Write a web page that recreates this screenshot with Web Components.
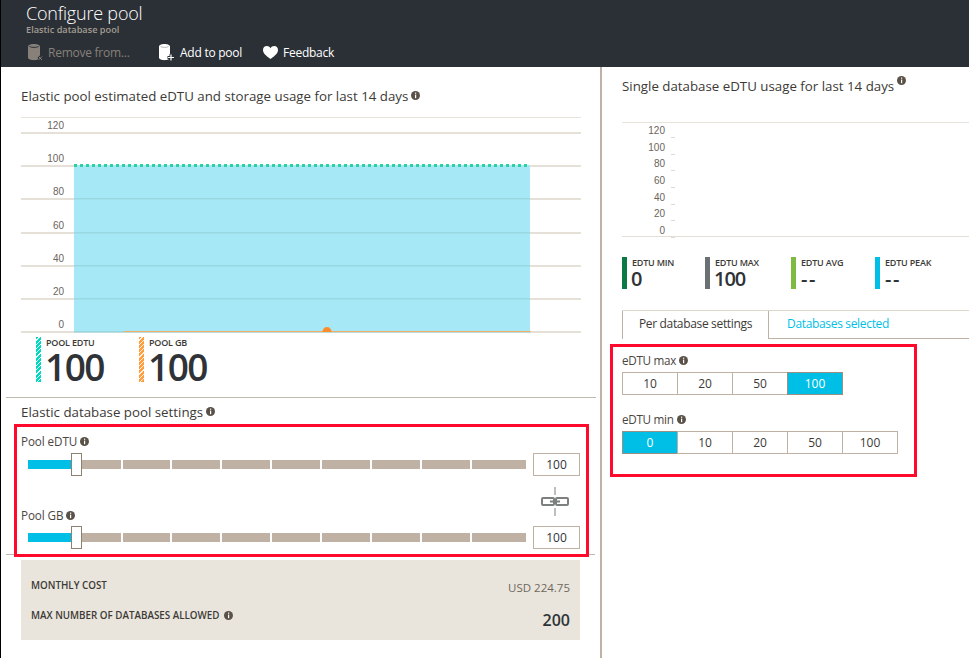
<!DOCTYPE html>
<html>
<head>
<meta charset="utf-8">
<title>Configure pool</title>
<style>
  html, body { margin: 0; padding: 0; background: #fff; }
  body { font-family: "Open Sans", "Liberation Sans", sans-serif; color: #3c3a36; }
</style>
</head>
<body>
<m-root></m-root>
<script>
class BaseElement extends HTMLElement {
  render(htmlstring) {
    if (!this.shadowRoot) this.attachShadow({mode: 'open'});
    let tpl = document.createElement('template');
    tpl.innerHTML = htmlstring;
    this.shadowRoot.appendChild(tpl.content.cloneNode(true));
    return this;
  }
  attr(name, dflt) {
    return this.hasAttribute(name) ? this.getAttribute(name) : dflt;
  }
}

customElements.define('m-info', class extends BaseElement {
  connectedCallback() {
    this.render(`<style>
      :host { display: inline-block; width: 9px; height: 9px; line-height: 0; }
      svg { display: block; }
      </style>
      <svg width="9" height="9" viewBox="0 0 9 9">
        <circle cx="4.5" cy="4.5" r="4.5" fill="#5a5248"/>
        <rect x="4" y="1.6" width="1.2" height="1.2" fill="#fff"/>
        <rect x="4" y="3.6" width="1.2" height="3.6" fill="#fff"/>
      </svg>`);
  }
});

customElements.define('m-command', class extends BaseElement {
  connectedCallback() {
    const icons = {
      remove: `<svg width="17" height="18" viewBox="0 0 17 18">
        <path d="M2 3.500c0-3.500 12-3.500 12 0v11c0 3.500-12 3.500-12 0z" fill="#87817a"/>
        <path d="M3.500 3.500c1.500 1.200 7.500 1.200 9 0" stroke="#2b3036" fill="none"/>
        <path d="M12.500 13.500l3.500 3.500M16 13.500l-3.500 3.500" stroke="#2b3036" stroke-width="2.500"/>
        <path d="M12.500 13.500l3.500 3.500M16 13.500l-3.500 3.500" stroke="#87817a" stroke-width="1"/></svg>`,
      add: `<svg width="17" height="18" viewBox="0 0 17 18">
        <path d="M1 3.500c0-3.500 11-3.500 11 0v11c0 3.500-11 3.500-11 0z" fill="#fff"/>
        <path d="M2.500 3.500c1.500 1.200 6.500 1.200 8 0" stroke="#b9b9b9" fill="none"/>
        <path d="M13 11v6.500M9.500 14.500h6.500" stroke="#2b3036" stroke-width="3"/>
        <path d="M13 11.500v6M10 14.500h6" stroke="#fff" stroke-width="1.200"/></svg>`,
      heart: `<svg width="15" height="13" viewBox="0 0 15 13">
        <path d="M7.500 13C3 9.500 0 7.200 0 3.900 0 1.600 1.700 0 3.800 0c1.600 0 2.900.8 3.700 2.200C8.300.8 9.600 0 11.200 0 13.300 0 15 1.600 15 3.900c0 3.300-3 5.600-7.500 9.100z" fill="#fff"/></svg>`
    };
    this.render(`<style>
      :host { display: flex; align-items: center; gap: 5px; font-size: 12px; letter-spacing: -.25px; color: #fff; white-space: nowrap; }
      :host([disabled]) { color: #87817a; }
      svg { display: block; flex: none; }
      </style>
      ${icons[this.attr('icon')]}<slot></slot>`);
  }
});

customElements.define('m-header', class extends BaseElement {
  connectedCallback() {
    this.render(`<style>
      :host { display: block; height: 67px; box-sizing: border-box; background: #2b3036; padding: 0 0 0 25px; }
      h1 { margin: 0; padding-top: 2px; font-size: 18px; line-height: 22px; font-weight: 300; letter-spacing: -.2px; color: #fff; }
      small { display: block; font-size: 9.200px; line-height: 12px; font-weight: 600; color: #a39c92; }
      nav { display: flex; margin-top: 6px; height: 20px; align-items: center; }
      m-command:nth-child(1) { width: 132px; }
      m-command:nth-child(2) { width: 105px; }
      </style>
      <h1>Configure pool</h1>
      <small>Elastic database pool</small>
      <nav>
        <m-command icon="remove" disabled>Remove from...</m-command>
        <m-command icon="add">Add to pool</m-command>
        <m-command icon="heart">Feedback</m-command>
      </nav>`);
  }
});

customElements.define('m-heading', class extends BaseElement {
  connectedCallback() {
    this.render(`<style>
      :host { display: block; font-size: 13.300px; line-height: 18px; color: #3c3a36; white-space: nowrap; }
      m-info { margin-left: 3px; vertical-align: 1px; }
      :host([sup]) m-info { vertical-align: 6px; }
      </style>
      <slot></slot><m-info></m-info>`);
  }
});

customElements.define('m-pool-chart', class extends BaseElement {
  connectedCallback() {
    const ys = [22, 55, 88, 122, 155, 188, 221];
    const labels = [120, 100, 80, 60, 40, 20, 0];
    const lines = ys.map(y => `<rect x="20" y="${y}" width="560" height="2" fill="#e6e1d8"/>`).join('');
    const inner = ys.slice(2).map(y => `<rect x="73" y="${y}" width="456" height="1.500" fill="#98d8e2"/>`).join('');
    const text = ys.map((y, i) => `<text x="63" y="${y - 3}" text-anchor="end">${labels[i]}</text>`).join('');
    this.render(`<style>
      :host { display: block; height: 225px; }
      svg { display: block; }
      text { font: 10px "Liberation Sans", sans-serif; fill: #6c655c; }
      </style>
      <svg width="599" height="225">
        <rect x="20" y="7" width="560" height="1" fill="#e9e5dc"/>
        ${lines}
        <rect x="73" y="55" width="456" height="167" fill="#a6e8f5"/>
        ${inner}
        <path d="M73 55.500H529" stroke="#2fd0a0" stroke-width="3" stroke-dasharray="3 3"/>
        <rect x="123" y="221" width="407" height="1" fill="#f3ae63"/>
        <path d="M321.500 222a4.500 5 0 0 1 9 0z" fill="#ff8c2b"/>
        ${text}
      </svg>`);
  }
});

customElements.define('m-db-chart', class extends BaseElement {
  connectedCallback() {
    const labels = [120, 100, 80, 60, 40, 20, 0];
    const rows = labels.map((l, i) => {
      const y = 8.5 + i * 16.67;
      return `<text x="63" y="${y + 3.500}" text-anchor="end">${l}</text>
              <rect x="69" y="${Math.round(y + 6.500)}" width="4" height="1" fill="#dfd9cf"/>`;
    }).join('');
    this.render(`<style>
      :host { display: block; height: 125px; }
      svg { display: block; }
      text { font: 10px "Liberation Sans", sans-serif; fill: #6c655c; }
      </style>
      <svg width="367" height="125">
        <rect x="20" y="0" width="347" height="1" fill="#e9e5dc"/>
        <rect x="20" y="114" width="347" height="1" fill="#e4dfd6"/>
        ${rows}
      </svg>`);
  }
});

customElements.define('m-metric', class extends BaseElement {
  connectedCallback() {
    const value = this.attr('value');
    this.render(`<style>
      :host { display: flex; gap: 5px; color: #2f3338; }
      i { display: block; flex: none; width: 5px; background: var(--bar, #888); }
      :host([big]) i { height: 45px; }
      :host(:not([big])) i { height: 32px; }
      div { display: flex; flex-direction: column; }
      b { font-size: 9px; font-weight: 600; line-height: 12px; white-space: nowrap; letter-spacing: -.2px; color: #3c3a36; }
      span { font-weight: 600; font-size: 20px; line-height: 19px; letter-spacing: -1px; margin-left: -1px; }
      span.dash { letter-spacing: 1.500px; margin-left: 0; }
      :host([big]) span { font-size: 37px; line-height: 34px; letter-spacing: -1.500px; margin-top: 1px; }
      </style>
      <i></i><div><b>${this.attr('label')}</b><span class="${value === '--' ? 'dash' : ''}">${value}</span></div>`);
  }
});

customElements.define('m-slider', class extends BaseElement {
  connectedCallback() {
    const segs = [39, 47, 48, 48, 48, 48, 48, 48, 54].map(w => `<u style="width:${w}px"></u>`).join('');
    this.render(`<style>
      :host { display: flex; align-items: center; height: 23px; margin-left: 7px; }
      .fill { width: 43px; height: 9px; background: #00bfe6; }
      .thumb { box-sizing: border-box; width: 11px; height: 23px; background: #fff; border: 1px solid #8c8172; }
      .segs { display: flex; gap: 2px; }
      u { display: block; height: 9px; background: #bfb1a3; }
      .val { box-sizing: border-box; width: 47px; height: 23px; margin-left: 7px; border: 1px solid #bfb1a3;
             font-size: 12px; line-height: 21px; text-align: center; color: #2f3338; }
      </style>
      <div class="fill"></div><div class="thumb"></div>
      <div class="segs">${segs}</div>
      <div class="val">${this.attr('value')}</div>`);
  }
});

customElements.define('m-link-icon', class extends BaseElement {
  connectedCallback() {
    this.render(`<style>
      :host { display: block; height: 29px; }
      svg { display: block; }
      </style>
      <svg width="28" height="29" viewBox="0 0 28 29">
        <path d="M14 0v8M14 21v8" stroke="#7c807e" stroke-width="1"/>
        <rect x="1" y="11" width="12" height="7" rx="1" fill="none" stroke="#7c807e" stroke-width="2"/>
        <rect x="15" y="11" width="12" height="7" rx="1" fill="none" stroke="#7c807e" stroke-width="2"/>
        <path d="M9 14.500h10" stroke="#7c807e" stroke-width="2"/>
      </svg>`);
  }
});

customElements.define('m-callout', class extends BaseElement {
  connectedCallback() {
    this.render(`<style>
      :host { display: block; box-sizing: border-box; border: 3px solid #ff0a2d; }
      </style><slot></slot>`);
  }
});

customElements.define('m-label', class extends BaseElement {
  connectedCallback() {
    this.render(`<style>
      :host { display: block; font-size: 11.700px; letter-spacing: -.1px; line-height: 16px; color: #4a463f; white-space: nowrap; }
      m-info { margin-left: 3px; vertical-align: 0; }
      </style><slot></slot><m-info></m-info>`);
  }
});

customElements.define('m-segmented', class extends BaseElement {
  connectedCallback() {
    const sel = this.attr('selected');
    const cells = this.attr('options').split(',').map(o =>
      `<div class="${o === sel ? 'on' : ''}">${o}</div>`).join('');
    this.render(`<style>
      :host { display: flex; }
      div { box-sizing: border-box; height: 23px; margin-right: -1px; flex: none; width: 56px; border: 1px solid #bfb1a3;
            font-size: 12px; line-height: 21px; text-align: center; color: #3c3a36; background: #fff; }
      div.on { background: #00bfe6; color: #fff; border-color: #9a8f80; }
      </style>${cells}`);
  }
});

customElements.define('m-tabs', class extends BaseElement {
  connectedCallback() {
    this.render(`<style>
      :host { display: flex; height: 29px; box-sizing: border-box; border-top: 1px solid #dcd6cb; font-size: 12px; letter-spacing: -.33px; white-space: nowrap; }
      .active { box-sizing: border-box; width: 147px; height: 28px; border: 1px solid #bfb1a3; border-top: 0; border-bottom: 0; line-height: 25px; text-align: center; color: #3c3a36; }
      .other { flex: 1; height: 28px; box-sizing: border-box; border-bottom: 1px solid #bfb1a3; padding-left: 18px; line-height: 25px; color: #00bfe6; }
      </style>
      <div class="active">Per database settings</div>
      <div class="other">Databases selected</div>`);
  }
});

customElements.define('m-cost', class extends BaseElement {
  connectedCallback() {
    this.render(`<style>
      :host { display: block; box-sizing: border-box; width: 559px; height: 80px; background: #e9e5dc; padding: 17px 10px 0; color: #3c3a36; }
      .row { display: flex; justify-content: space-between; }
      .top { height: 30px; align-items: flex-start; }
      b { font-size: 9.800px; line-height: 18px; font-weight: 600; }
      m-info { margin-left: 2px; vertical-align: -1px; }
      .usd { font-size: 11.500px; line-height: 22px; color: #6e675e; }
      .total { font-size: 16px; font-weight: 600; line-height: 26px; color: #2f3338; }
      </style>
      <div class="row top"><b>MONTHLY COST</b><span class="usd">USD 224.75</span></div>
      <div class="row"><b>MAX NUMBER OF DATABASES ALLOWED <m-info></m-info></b><span class="total">200</span></div>`);
  }
});

customElements.define('m-pool-pane', class extends BaseElement {
  connectedCallback() {
    this.render(`<style>
      :host { display: block; box-sizing: border-box; width: 601px; border-right: 2px solid #bfb1a3; height: 591px; }
      .title { padding: 20px 0 0 20px; height: 23px; }
      .metrics { display: flex; padding: 2px 0 0 35px; height: 62px; box-sizing: border-box; }
      m-metric:first-child { width: 103px; }
      .rule { height: 1px; background: #bfb8ae; margin: 0 4px 0 5px; }
      .sub { padding: 5px 0 0 20px; height: 21px; }
      m-callout { margin: 0 11px 0 13px; height: 133px; padding: 6px 0 0 4px; position: relative; z-index: 1; }
      .first { margin-top: 4px; }
      .second { margin-top: 3px; }
      m-link-icon { margin: 0 0 -9px 520px; padding-top: 11px; }
      .rule2 { height: 1px; background: #bfb8ae; margin: -3px 5px 0 5px; }
      m-cost { margin: 5px 0 0 20px; }
      </style>
      <div class="title"><m-heading>Elastic pool estimated eDTU and storage usage for last 14 days</m-heading></div>
      <m-pool-chart></m-pool-chart>
      <div class="metrics">
        <m-metric big label="POOL EDTU" value="100" style="--bar:repeating-linear-gradient(135deg,#00d8c0 0 2px,#e8fbf8 2px 3px)"></m-metric>
        <m-metric big label="POOL GB" value="100" style="--bar:repeating-linear-gradient(135deg,#ff9c3c 0 2px,#fff0e0 2px 3px)"></m-metric>
      </div>
      <div class="rule"></div>
      <div class="sub"><m-heading>Elastic database pool settings</m-heading></div>
      <m-callout>
        <m-label>Pool eDTU</m-label>
        <m-slider class="first" value="100"></m-slider>
        <m-link-icon></m-link-icon>
        <m-label>Pool GB</m-label>
        <m-slider class="second" value="100"></m-slider>
      </m-callout>
      <div class="rule2"></div>
      <m-cost></m-cost>`);
  }
});

customElements.define('m-db-pane', class extends BaseElement {
  connectedCallback() {
    this.render(`<style>
      :host { display: block; flex: 1; min-width: 0; }
      .title { padding: 9px 0 0 20px; height: 55px; box-sizing: border-box; }
      .metrics { display: flex; padding: 10px 0 0 20px; height: 63px; box-sizing: border-box; }
      m-metric:nth-child(1) { width: 83px; }
      m-metric:nth-child(2) { width: 86px; }
      m-metric:nth-child(3) { width: 84px; }
      m-tabs { margin-left: 20px; }
      m-callout { margin: 5px 0 0 8px; width: 307px; height: 133px; padding: 5px 0 0 9px; }
      m-label { letter-spacing: -.3px; }
      m-segmented { margin-top: 4px; }
      .min { margin-top: 16px; }
      </style>
      <div class="title"><m-heading sup>Single database eDTU usage for last 14 days</m-heading></div>
      <m-db-chart></m-db-chart>
      <div class="metrics">
        <m-metric label="EDTU MIN" value="0" style="--bar:#0a7a44"></m-metric>
        <m-metric label="EDTU MAX" value="100" style="--bar:#6b7173"></m-metric>
        <m-metric label="EDTU AVG" value="--" style="--bar:#7fba42"></m-metric>
        <m-metric label="EDTU PEAK" value="--" style="--bar:#00bfe6"></m-metric>
      </div>
      <m-tabs></m-tabs>
      <m-callout>
        <m-label>eDTU max</m-label>
        <m-segmented options="10,20,50,100" selected="100"></m-segmented>
        <m-label class="min">eDTU min</m-label>
        <m-segmented options="0,10,20,50,100" selected="0"></m-segmented>
      </m-callout>`);
  }
});

customElements.define('m-root', class extends BaseElement {
  connectedCallback() {
    this.render(`<style>
      :host { display: block; width: 969px; height: 658px; overflow: hidden; box-sizing: border-box; border-left: 1px solid #000; }
      main { display: flex; }
      </style>
      <m-header></m-header>
      <main><m-pool-pane></m-pool-pane><m-db-pane></m-db-pane></main>`);
  }
});
</script>
</body>
</html>
